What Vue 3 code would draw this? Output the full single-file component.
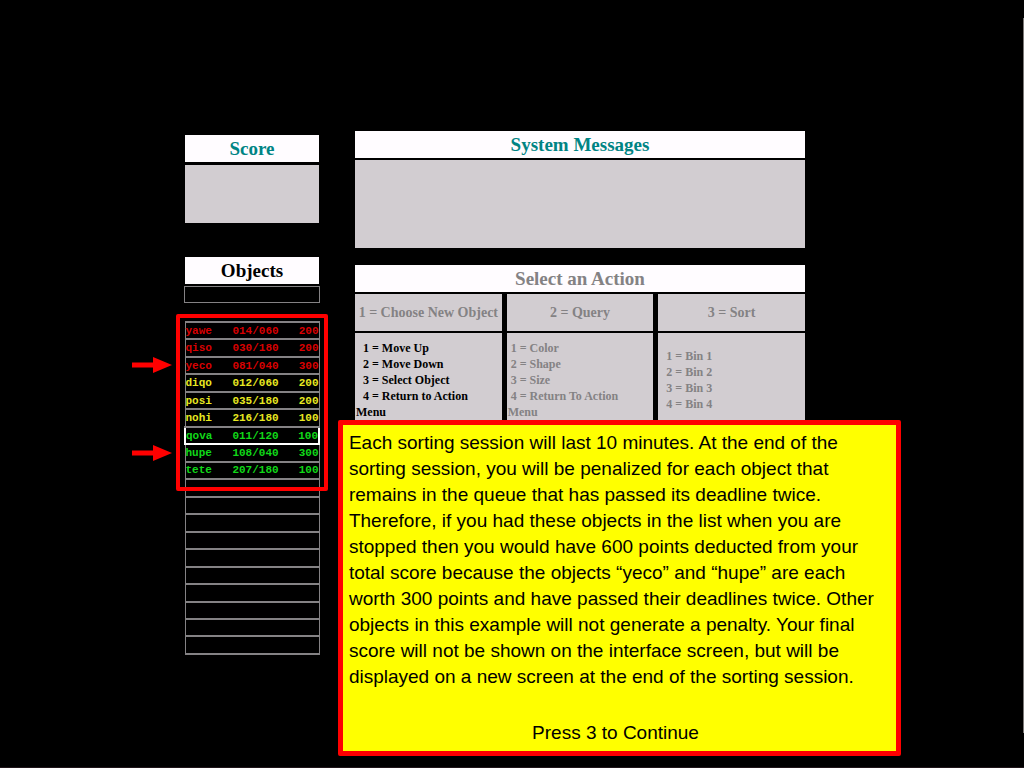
<script setup>
const objects = [
  { name: 'yawe', time: '014/060', points: 200, tone: 'red' },
  { name: 'qiso', time: '030/180', points: 200, tone: 'red' },
  { name: 'yeco', time: '081/040', points: 300, tone: 'red' },
  { name: 'diqo', time: '012/060', points: 200, tone: 'yellow' },
  { name: 'posi', time: '035/180', points: 200, tone: 'yellow' },
  { name: 'nohi', time: '216/180', points: 100, tone: 'yellow' },
  { name: 'qova', time: '011/120', points: 100, tone: 'green', selected: true },
  { name: 'hupe', time: '108/040', points: 300, tone: 'green' },
  { name: 'tete', time: '207/180', points: 100, tone: 'green' },
]
const emptyRows = 10
</script>

<template>
  <main class="screen">
    <div class="left">
      <section>
        <h2 class="bar teal">Score</h2>
        <div class="score-body"></div>
      </section>
      <section class="objects">
        <h2 class="bar">Objects</h2>
        <div class="slot"></div>
        <div class="queue">
          <table>
            <tbody>
              <tr v-for="o in objects" :key="o.name" :class="[o.tone, { selected: o.selected }]">
                <td class="name">{{ o.name }}</td>
                <td class="time">{{ o.time }}</td>
                <td class="points">{{ o.points }}</td>
              </tr>
              <tr v-for="n in emptyRows" :key="n"><td colspan="3"></td></tr>
            </tbody>
          </table>
          <div class="outline"></div>
          <svg class="arrow first" viewBox="0 0 40 18"><path d="M0 6.500H21V1L40 9L21 17V11.500H0Z" fill="#f00" /></svg>
          <svg class="arrow second" viewBox="0 0 40 18"><path d="M0 6.500H21V1L40 9L21 17V11.500H0Z" fill="#f00" /></svg>
        </div>
      </section>
    </div>

    <div class="right">
      <section>
        <h2 class="bar teal">System Messages</h2>
        <div class="message-body"></div>
      </section>
      <section class="actions">
        <h2 class="bar gray">Select an Action</h2>
        <div class="columns">
          <div class="column">
            <h3>1 = Choose New Object</h3>
            <ul class="active">
              <li>1 = Move Up</li>
              <li>2 = Move Down</li>
              <li>3 = Select Object</li>
              <li>4 = Return to Action<br />Menu</li>
            </ul>
          </div>
          <div class="column">
            <h3>2 = Query</h3>
            <ul class="query">
              <li>1 = Color</li>
              <li>2 = Shape</li>
              <li>3 = Size</li>
              <li>4 = Return To Action<br />Menu</li>
            </ul>
          </div>
          <div class="column">
            <h3>3 = Sort</h3>
            <ul class="bins">
              <li>1 = Bin 1</li>
              <li>2 = Bin 2</li>
              <li>3 = Bin 3</li>
              <li>4 = Bin 4</li>
            </ul>
          </div>
        </div>
      </section>
    </div>

    <aside class="notice">
      <p>
        Each sorting session will last 10 minutes. At the end of the
        sorting session, you will be penalized for each object that
        remains in the queue that has passed its deadline twice.
        Therefore, if you had these objects in the list when you are
        stopped then you would have 600 points deducted from your
        total score because the objects “yeco” and “hupe” are each
        worth 300 points and have passed their deadlines twice. Other
        objects in this example will not generate a penalty. Your final
        score will not be shown on the interface screen, but will be
        displayed on a new screen at the end of the sorting session.
      </p>
      <p class="continue">Press 3 to Continue</p>
    </aside>
    <div class="edge"></div>
  </main>
</template>

<style>
body { margin: 0; background: #000; }
</style>

<style scoped>
.screen {
  position: relative;
  box-sizing: border-box;
  min-height: 100vh;
  padding-top: 131px;
  display: grid;
  grid-template-columns: 184fr 136fr 35fr 450fr 219fr;
  align-items: start;
  background: #000;
  border-bottom: 1px solid #20161a;
  font-family: "Liberation Serif", "Times New Roman", serif;
  font-weight: bold;
}
.left { grid-column: 2; padding-top: 4px; }
.right { grid-column: 4; }
h2, h3, p, ul { margin: 0; padding: 0; }
ul { list-style: none; }
.bar {
  height: 27px;
  line-height: 28px;
  background: #fffcff;
  text-align: center;
  font-size: 19px;
  color: #000;
}
.left .bar, .score-body { margin: 0 1px; }
.teal { color: #008484; }
.gray { color: #848284; }
.left .score-body { margin-top: 3px; height: 58px; background: #d2cdd1; }
.objects { margin-top: 34px; }
.slot { margin-top: 2px; height: 15px; border: 1px solid #848284; }
.queue { position: relative; margin-top: 18px; }
table {
  width: 100%;
  height: 334px;
  border-collapse: collapse;
  table-layout: fixed;
  border: 1px solid #848284;
  font: bold 11px/12px "Liberation Mono", monospace;
}
td { padding: 0; height: 12px; }
tr { border: 2px solid #848284; border-width: 2px 1px; }
tr.selected { border: 2px solid #fff; }
.name { width: 35%; }
.time { width: 40%; }
.points { text-align: right; }
.red { color: #d80000; }
.yellow { color: #e8e820; }
.green { color: #10d818; }
.outline {
  position: absolute;
  top: -7px;
  left: -8px;
  right: -8px;
  height: 169px;
  border: 4px solid #f00;
  border-radius: 2px;
}
.arrow { position: absolute; left: -52px; width: 40px; height: 18px; }
.first { top: 35px; }
.second { top: 123px; }
.message-body { margin-top: 2px; height: 88px; background: #d2cdd1; }
.actions { margin-top: 17px; }
.columns { display: grid; grid-template-columns: 147fr 147fr 147fr; column-gap: 5px; margin-top: 2px; }
.column { min-width: 0; }
h3 {
  height: 37px;
  line-height: 37px;
  background: #d2cdd1;
  color: #848284;
  text-align: center;
  font-size: 14px;
  white-space: nowrap;
}
ul {
  box-sizing: border-box;
  height: 120px;
  margin-top: 2px;
  padding: 7px 1px 0;
  background: #d2cdd1;
  color: #848284;
  font-size: 12px;
  line-height: 16px;
}
.active { color: #000; }
.active li { text-indent: 7px; }
.query li { text-indent: 3px; }
ul.bins { padding: 15px 8px 0; }
.notice {
  position: absolute;
  top: 420px;
  left: 33%;
  width: 55%;
  box-sizing: border-box;
  padding: 5px 14px 5px 6px;
  border: 5px solid #f00;
  border-radius: 2px;
  background: #ff0;
  color: #000;
  font: 19px/26px "Liberation Sans", Arial, sans-serif;
}
.continue { margin-top: 30px; text-align: center; }
.edge {
  position: absolute;
  top: 18px;
  right: 0;
  bottom: 34px;
  width: 1px;
  background: #7b7876;
}
</style>
